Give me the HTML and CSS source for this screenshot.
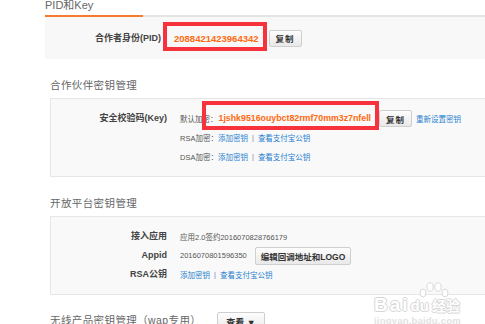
FILE: index.html
```html
<!DOCTYPE html>
<html lang="zh-CN">
  <head>
    <meta charset="UTF-8" />
    <title>密钥管理</title>
    <link rel="stylesheet" href="styles.css">
  </head>
  <body>
    <main class="page">
      <div class="tabbar">
        <span class="tab">PID和Key</span>
      </div>
      <section class="pid-box">
        <div class="label">合作者身份(PID)</div>
        <span class="key mark pid">2088421423964342</span>
        <button class="btn">复制</button>
      </section>

      <h2>合作伙伴密钥管理</h2>
      <section class="box">
        <div class="row">
          <div class="label">安全校验码(Key)</div>
          <div class="value">
            默认加密：<span class="key mark secret">1jshk9516ouybct82rmf70mm3z7nfell</span>
            <button class="btn copy">复制</button>
            <a class="link reset">重新设置密钥</a>
          </div>
        </div>
        <div class="row">
          <div class="label"></div>
          <div class="value">
            RSA加密：<a class="link">添加密钥</a><span class="sep">|</span><a class="link">查看支付宝公钥</a>
          </div>
        </div>
        <div class="row">
          <div class="label"></div>
          <div class="value">
            DSA加密：<a class="link">添加密钥</a><span class="sep">|</span><a class="link">查看支付宝公钥</a>
          </div>
        </div>
      </section>

      <h2>开放平台密钥管理</h2>
      <section class="box">
        <div class="row">
          <div class="label">接入应用</div>
          <div class="value">应用2.0签约2016070828766179</div>
        </div>
        <div class="row">
          <div class="label">Appid</div>
          <div class="value">
            2016070801596350
            <button class="btn big">编辑回调地址和LOGO</button>
          </div>
        </div>
        <div class="row">
          <div class="label">RSA公钥</div>
          <div class="value">
            <a class="link">添加密钥</a><span class="sep">|</span><a class="link">查看支付宝公钥</a>
          </div>
        </div>
      </section>

      <div class="wap">
        <h2>无线产品密钥管理（wap专用）</h2>
        <button class="btn drop">查看 ▼</button>
      </div>
    </main>

    <div class="watermark">
      <svg class="paw" width="34" height="16" viewBox="0 0 34 16">
        <ellipse cx="6" cy="11" rx="3" ry="4" />
        <ellipse cx="13" cy="5" rx="3.2" ry="4.2" />
        <ellipse cx="21" cy="5" rx="3.2" ry="4.2" />
        <ellipse cx="28" cy="11" rx="3" ry="4" />
      </svg>
      <div class="wm-logo">
        <span>Bai</span><span class="wm-du">du</span><span class="wm-cn">经验</span>
      </div>
      <div class="wm-url">jingyan.baidu.com</div>
    </div>
  </body>
</html>
```

FILE: styles.css
```css
* {
  box-sizing: border-box;
  margin: 0;
  padding: 0;
}
html,
body {
  width: 485px;
  height: 324px;
  overflow: hidden;
  background: #fff;
}
body {
  position: relative;
  font-family: "Liberation Sans", "Noto Sans CJK SC", sans-serif;
  color: #555;
}
.page {
  width: 460px;
  margin-left: 45px;
}

/* top tab */
.tabbar {
  height: 17px;
  border-bottom: 2px solid #e4e4e4;
  display: flex;
  align-items: flex-end;

  & .tab {
    width: 98px;
    height: 17px;
    margin-bottom: -2px;
    border-bottom: 2px solid #f47c2c;
    font-size: 11px;
    line-height: 11px;
    color: #666;
  }
}

.pid-box {
  height: 42px;
  background: #f8f8f8;
  display: flex;
  align-items: center;

  & .label {
    width: 116px;
    text-align: right;
  }
  & .pid {
    margin-left: 13px;
  }
  & .btn {
    margin-left: 10px;
  }
}

.label {
  font-size: 9px;
  font-weight: bold;
  color: #444;
  line-height: 13px;
  white-space: nowrap;
}

h2 {
  margin: 19px 0 6px 5px;
  font-size: 10.5px;
  font-weight: normal;
  line-height: 14px;
  letter-spacing: 0.4px;
  color: #666;
}

.box {
  margin-left: 5px;
  width: 450px;
  border: 1px solid #e6e6e6;
  background: #f9f9f9;
  padding: 10px 0;

  & .row {
    height: 19px;
    display: flex;
    align-items: center;
  }
  & .label {
    width: 116px;
    text-align: right;
    flex: none;
  }
  & .value {
    margin-left: 13px;
    display: flex;
    align-items: center;
    font-size: 7.5px;
    color: #555;
    white-space: nowrap;
  }
}
.box:first-of-type .row:first-child {
  margin-top: 1px;
}

.key {
  font-size: 9.5px;
  font-weight: bold;
  color: #ff6a10;
  line-height: 13px;
}
.secret {
  font-size: 8.8px;
  margin-left: 1px;
}

/* red annotation frames drawn over the values */
.mark {
  position: relative;

  &::after {
    content: "";
    position: absolute;
    border: 4px solid #f7323c;
  }
}
.pid::after {
  left: -11px;
  right: -8px;
  top: -10px;
  bottom: -6px;
}
.secret::after {
  left: -17px;
  right: -8px;
  top: -11px;
  bottom: -5px;
}

.btn {
  font-family: "Liberation Sans", "Noto Sans CJK SC", sans-serif;
  font-size: 8.5px;
  font-weight: bold;
  color: #333;
  height: 17px;
  padding: 0 6px;
  border: 1px solid #cfcfcf;
  border-radius: 2px;
  background: linear-gradient(#fdfdfd, #e9e9e9);
  letter-spacing: 1px;
}
.copy {
  margin-left: 8px;
}
.big {
  height: 18px;
  margin-left: 8px;
  padding: 0 5px;
  letter-spacing: 0;
  font-size: 8.5px;
}

.link {
  color: #1f7fd0;
}
.reset {
  margin-left: 4px;
}
.sep {
  color: #8a7aa8;
  margin: 0 4px;
}

.wap {
  display: flex;
  align-items: flex-start;

  & h2 {
    margin-top: 18px;
    margin-bottom: 0;
  }
  & .drop {
    margin: 17px 0 0 16px;
    height: 20px;
    padding: 0 8px;
    font-size: 9px;
    letter-spacing: 0;
  }
}

/* baidu jingyan watermark */
.watermark {
  position: absolute;
  left: 374px;
  top: 282px;
  width: 96px;
  color: #fff;
  text-shadow: -1px 0 #d6d6d6, 1px 0 #d6d6d6, 0 -1px #d6d6d6, 0 1px #d6d6d6;

  & .paw {
    position: absolute;
    left: 43px;
    top: 0;
    fill: #fff;
    stroke: #d9d9d9;
    stroke-width: 1;
  }
  & .wm-logo {
    margin-top: 13px;
    display: flex;
    align-items: baseline;
    font-size: 19px;
    font-weight: bold;
    line-height: 19px;
    letter-spacing: 2px;
  }
  & .wm-du {
    font-size: 15px;
    letter-spacing: 0;
    margin: 0 3px 0 1px;
  }
  & .wm-cn {
    font-size: 14px;
    font-family: "Noto Sans CJK SC", sans-serif;
    letter-spacing: 0;
  }
  & .wm-url {
    font-size: 9.5px;
    font-weight: bold;
    line-height: 12px;
    letter-spacing: 0.2px;
    text-shadow: none;
    color: #e2e2e2;
  }
}
```
